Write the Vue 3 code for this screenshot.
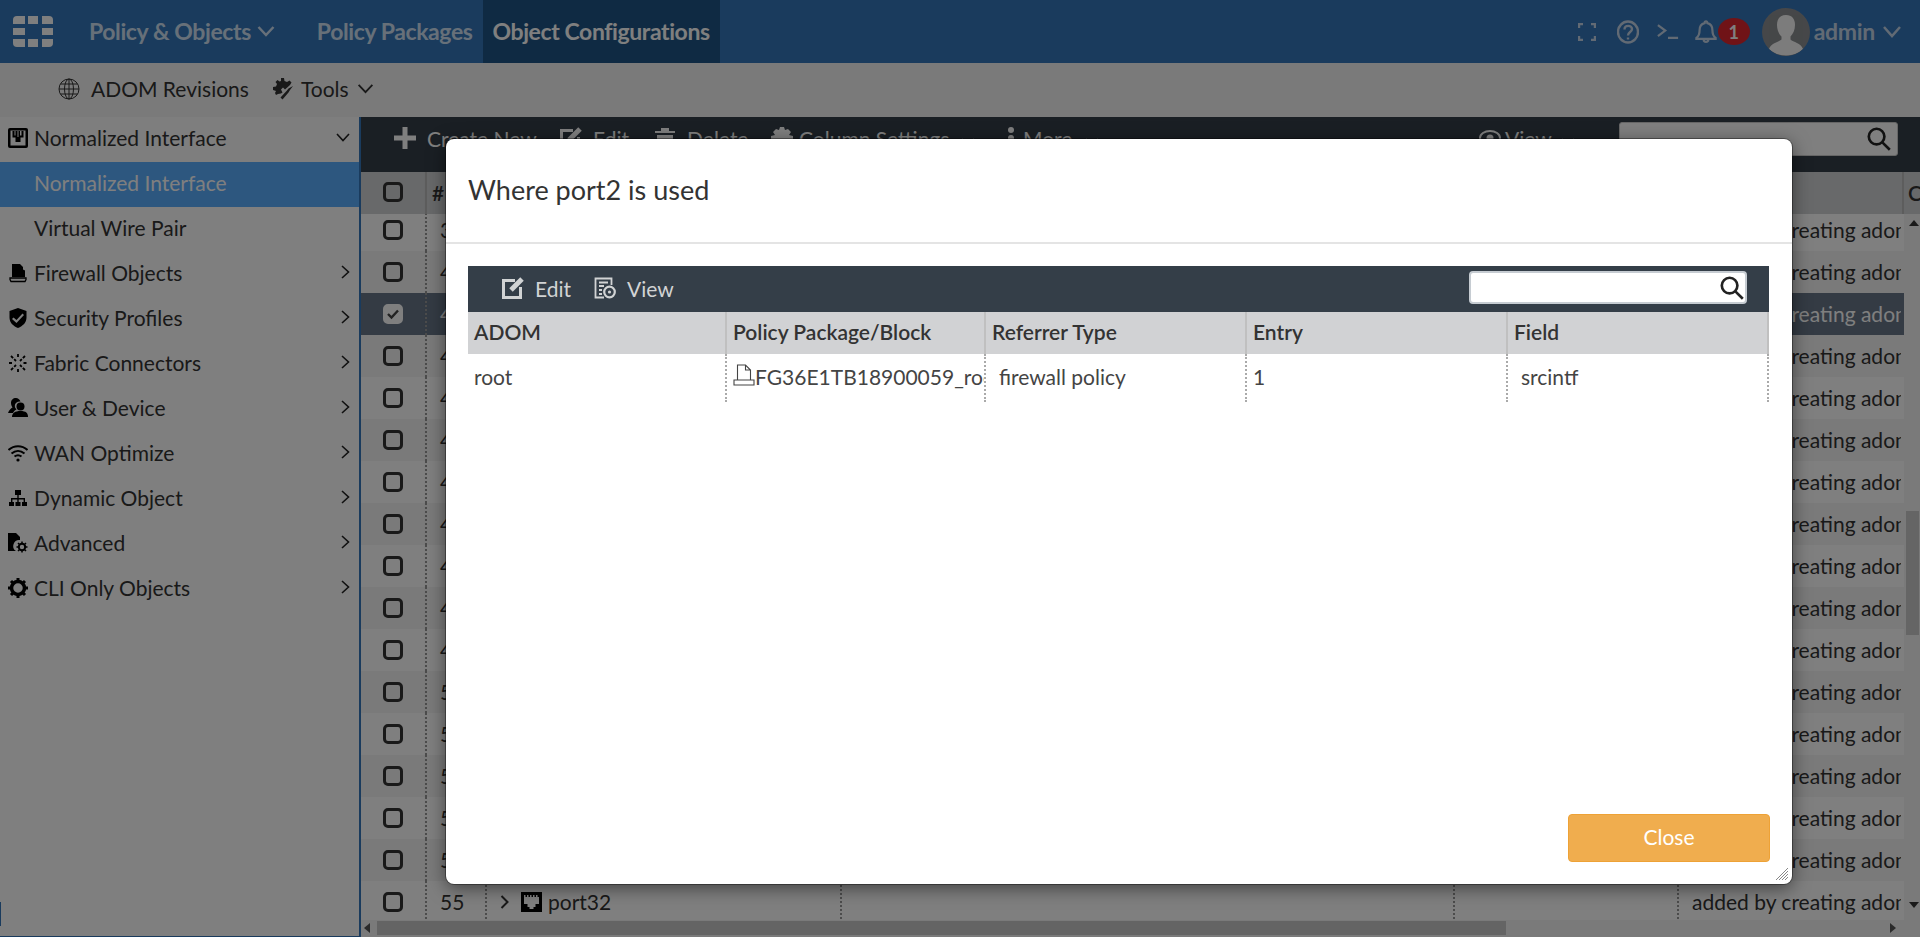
<script setup>
import { ref } from 'vue';

const navItems = ref([
    { id: 1, label: 'Policy & Objects', arrow: true, cls: 'nav-policy' },
    { id: 2, label: 'Policy Packages', arrow: false, cls: 'nav-packages' },
    { id: 3, label: 'Object Configurations', arrow: false, cls: 'nav-active' }
]);

const menuItems = ref([
    { id: 'firewall', label: 'Firewall Objects' },
    { id: 'security', label: 'Security Profiles' },
    { id: 'fabric', label: 'Fabric Connectors' },
    { id: 'user', label: 'User & Device' },
    { id: 'wan', label: 'WAN Optimize' },
    { id: 'dynamic', label: 'Dynamic Object' },
    { id: 'advanced', label: 'Advanced' },
    { id: 'cli', label: 'CLI Only Objects' }
]);

const rows = ref(Array.from({ length: 17 }, (_, i) => ({
    num: 39 + i,
    name: 'port' + (16 + i),
    selected: i === 2,
    comment: 'added by creating adom'
})));
</script>

<template>
    <div class="page">
        <header class="topbar">
            <svg class="logo" viewBox="0 0 40 31" fill="#fff">
                <path d="M4 0h8v8H0V4a4 4 0 0 1 4-4z" />
                <rect x="15" y="0" width="10" height="8" />
                <path d="M29 0h7a4 4 0 0 1 4 4v4H29z" />
                <rect x="0" y="12" width="12" height="7" />
                <rect x="29" y="12" width="11" height="7" />
                <path d="M0 23h12v8H4a4 4 0 0 1-4-4z" />
                <rect x="15" y="23" width="10" height="8" />
                <path d="M29 23h11v4a4 4 0 0 1-4 4h-7z" />
            </svg>
            <nav class="nav">
                <a v-for="item in navItems" :key="item.id" :class="['nav-item', item.cls]">
                    {{ item.label }}
                    <svg v-if="item.arrow" class="nav-arrow" viewBox="0 0 18 12"><path d="M1.5 2 9 10l7.500-8" /></svg>
                </a>
            </nav>
            <div class="top-right">
                <svg class="ti ti-expand" viewBox="0 0 18 18"><path d="M1 5V1h4M13 1h4v4M17 13v4h-4M5 17H1v-4" /></svg>
                <svg class="ti ti-help" viewBox="0 0 22 24"><ellipse cx="11" cy="12" rx="10" ry="10.500" /><path d="M7.500 9.500c0-5 7.500-4.500 7.500-.5 0 3-4 3-4 6.500" /><path d="M11 17.500v2" /></svg>
                <svg class="ti ti-term" viewBox="0 0 24 18"><path d="M1 2l8 6-8 6M12 16h11" /></svg>
                <svg class="ti ti-bell" viewBox="0 0 24 26"><path d="M12 1.500c-1 0-1.500.8-1.500 1.800C6.500 4.300 5 7.500 5 11c0 4-1.500 7-3.500 8.500v1h21v-1C20.500 18 19 15 19 11c0-3.500-1.500-6.700-5.500-7.700C13.500 2.300 13 1.500 12 1.500zM9.500 21.500c0 3 5 3 5 0" /></svg>
                <span class="badge">1</span>
                <span class="avatar">
                    <svg viewBox="0 0 48 48" fill="#fff" opacity="0.95">
                        <path d="M24 7c-6 0-9 4-9 10 0 5 2 9 4.500 11.500v3C17 34 9 35 7 41c4 4 10 6.500 17 6.500S37 45 41 41c-2-6-10-7-12.500-9.500v-3C31 26 33 22 33 17c0-6-3-10-9-10z" />
                    </svg>
                </span>
                <span class="admin">admin</span>
                <svg class="admin-arrow" viewBox="0 0 20 13"><path d="M2 2l8 9 8-9" /></svg>
            </div>
        </header>

        <div class="subbar">
            <svg class="sub-globe" viewBox="0 0 22 22">
                <circle cx="11" cy="11" r="10" />
                <ellipse cx="11" cy="11" rx="4.500" ry="10" />
                <path d="M11 1v20M1 11h20M2.500 6h17M2.500 16h17" />
            </svg>
            <span class="sub-revisions">ADOM Revisions</span>
            <svg class="sub-tools" viewBox="0 0 22 24">
                <path d="M9 1h3l.5 3 2.500 1 2.500-1.500 2 2-1.500 2.500-5 4.500-2-2-2 2 1.500 3-1.500 1L6 17l-2 1-1-2 1-2-3-1v-3l3-.5L5 7 3.500 5l2-2L7.500 4.500 9 4z" />
                <path d="M21 9l-3 4-1.500 2.500-6 7-2-2 6-6.500 2-2.500z" />
            </svg>
            <span class="sub-label">Tools</span>
            <svg class="sub-arrow" viewBox="0 0 18 12"><path d="M1.500 2 9 10l7.500-8" /></svg>
        </div>

        <div class="main">
            <aside class="sidebar">
                <div class="menu-row menu-head">
                    <svg class="menu-icon" viewBox="0 0 20 20">
                        <rect x="0" y="0" width="20" height="20" rx="2" fill="#000" />
                        <rect x="2.500" y="2.500" width="15" height="15" fill="#fff" />
                        <path d="M4.500 3v6.500h3V14h5V9.500h3V3h-2v4.500h-1.500V3h-1.500v6h-1V3H7.500v4.500H6.500V3z" fill="#000" />
                    </svg>
                    <span>Normalized Interface</span>
                    <svg class="menu-down" viewBox="0 0 14 9"><path d="M1 1l6 6.500L13 1" /></svg>
                </div>
                <div class="menu-row menu-sub menu-current">Normalized Interface</div>
                <div class="menu-row menu-sub">Virtual Wire Pair</div>
                <div v-for="m in menuItems" :key="m.id" class="menu-row">
                    <svg class="menu-icon" viewBox="0 0 20 20">
                        <g v-if="m.id === 'firewall'">
                            <path d="M4 1h8l3 3v2.500l2 1V14H4z" fill="#000" />
                            <path d="M2 15h16v1.500l-1 2H3l-1-2z" fill="none" stroke="#000" stroke-width="1.300" />
                        </g>
                        <path v-else-if="m.id === 'security'" d="M10 0l8.500 3v6.500c0 5-3.500 8.500-8.500 10.500C5 18 1.500 14.500 1.500 9.500V3zM5.500 9.500L4 11l4.500 4 7.500-8-1.500-1.500-6 6.500z" fill="#000" fill-rule="evenodd" />
                        <g v-else-if="m.id === 'fabric'" fill="none" stroke="#000" stroke-width="1.800">
                            <path d="M3 3l5 5M17 3l-5 5M3 17l5-5M17 17l-5-5M1 10h3.500M15.500 10H19M10 1v3M10 16v3" stroke-dasharray="3 1.500" />
                        </g>
                        <g v-else-if="m.id === 'user'" fill="#000">
                            <path d="M8 0C5 0 3 2 3 5c0 2 1 3.500 1.500 4.500C3 10.500 1 12 0 15h5c1-2 2-3 3.500-3.500C7 10 6.500 8.500 7 6.500 7.500 4.500 10 3 12.500 3.500 11.500 1.500 10 0 8 0z" />
                            <circle cx="12.500" cy="8.500" r="4" />
                            <path d="M4 19c0-4 3-6 8.500-6s7.500 2 7.500 6z" />
                        </g>
                        <g v-else-if="m.id === 'wan'" fill="none" stroke="#000" stroke-width="2">
                            <path d="M0.500 7c5.500-5 13.500-5 19 0M3.500 10.500c4-3.500 9-3.500 13 0M6.500 13.500c2-1.500 5-1.500 7 0" />
                            <circle cx="10" cy="17" r="1.600" fill="#000" stroke="none" />
                        </g>
                        <g v-else-if="m.id === 'dynamic'" fill="#000">
                            <rect x="7" y="2" width="6" height="5" />
                            <path d="M9.300 7h1.400v3H17v4h-1.400v-2.600H10.700V14H9.300v-2.600H4.400V14H3v-4h6.300z" />
                            <rect x="1" y="14" width="5" height="4" />
                            <rect x="7.500" y="14" width="5" height="4" />
                            <rect x="14" y="14" width="5" height="4" />
                        </g>
                        <g v-else-if="m.id === 'advanced'" fill="#000">
                            <path d="M0 0h8l4 4v3a6 6 0 0 0-4 11H0z" />
                            <circle cx="14" cy="14" r="3.200" fill="none" stroke="#000" stroke-width="2" />
                            <path d="M14 8.500v2.500M14 17v2.500M8.500 14H11M17 14h2.500M10 10l1.800 1.800M16.200 16.200L18 18M18 10l-1.800 1.800M11.800 16.200L10 18" stroke="#000" stroke-width="1.500" />
                        </g>
                        <g v-else-if="m.id === 'cli'">
                            <circle cx="10" cy="10" r="6.500" fill="none" stroke="#000" stroke-width="3.500" />
                            <path d="M10 0v4M10 16v4M0 10h4M16 10h4M3 3l3 3M14 14l3 3M17 3l-3 3M6 14l-3 3" stroke="#000" stroke-width="3" />
                        </g>
                    </svg>
                    <span>{{ m.label }}</span>
                    <svg class="menu-right" viewBox="0 0 9 14"><path d="M1 1l6.500 6L1 13" /></svg>
                </div>
                <span class="side-mark"></span>
            </aside>

            <section class="content">
                <div class="toolbar">
                    <span class="tool tool-create">
                        <svg class="tool-icon" viewBox="0 0 22 22"><path d="M11 0v22M0 11h22" stroke="#fff" stroke-width="5" /></svg>
                        Create New
                    </span>
                    <span class="tool tool-edit">
                        <svg class="tool-icon" viewBox="0 0 22 22" fill="none" stroke="#fff"><path d="M13 3.500H1.500v17h17V10" stroke-width="3" /><path d="M20 2 9 13" stroke-width="5" /></svg>
                        Edit
                    </span>
                    <span class="tool tool-delete">
                        <svg class="tool-icon" viewBox="0 0 22 22" fill="#fff"><path d="M7 1h8v3h6v2H1V4h6zM3 8h16v14H3z" /></svg>
                        Delete
                    </span>
                    <span class="tool tool-columns">
                        <svg class="tool-icon" viewBox="0 0 22 22" fill="#fff"><path d="M9 0h4l1 3 3-1 3 3-2 3 4 1v4l-4 1 2 3-3 3-3-2-1 4H9l-1-4-3 2-3-3 2-3-4-1V9l4-1-2-3 3-3 3 1z" /></svg>
                        Column Settings
                        <svg class="tool-arrow tool-arrow-cols" viewBox="0 0 18 12"><path d="M2 1l7 9 7-9" /></svg>
                    </span>
                    <span class="tool tool-more">
                        <svg class="tool-icon tool-dots" viewBox="0 0 8 22" fill="#fff"><circle cx="4" cy="3" r="3" /><circle cx="4" cy="11" r="3" /><circle cx="4" cy="19" r="3" /></svg>
                        More
                        <svg class="tool-arrow" viewBox="0 0 18 12"><path d="M2 1l7 9 7-9" /></svg>
                    </span>
                    <span class="tool tool-view">
                        <svg class="tool-icon" viewBox="0 0 22 22"><ellipse cx="11" cy="11" rx="10" ry="7" fill="none" stroke="#fff" stroke-width="2" /><circle cx="11" cy="11" r="3.500" fill="#fff" /></svg>
                        View
                        <svg class="tool-arrow" viewBox="0 0 18 12"><path d="M2 1l7 9 7-9" /></svg>
                    </span>
                    <div class="tool-search">
                        <svg class="search-icon" viewBox="0 0 20 20"><circle cx="8" cy="8" r="6.500" /><path d="M13 13l6 6" /></svg>
                    </div>
                </div>

                <div class="grid-head">
                    <div class="col-check head-cell"><span class="check"></span></div>
                    <div class="col-num head-cell">#</div>
                    <div class="col-name head-cell">Name</div>
                    <div class="col-a head-cell">Normalized</div>
                    <div class="col-b head-cell">Mapped</div>
                    <div class="col-c head-cell">Comments</div>
                    <div class="col-rest head-cell">C</div>
                </div>

                <div class="grid-wrap">
                    <div class="grid-rows">
                        <div v-for="row in rows" :key="row.num" :class="['grid-row', { selected: row.selected }]">
                            <div class="col-check cell">
                                <span :class="['check', { checked: row.selected }]">
                                    <svg v-if="row.selected" viewBox="0 0 14 12"><path d="M2 6l3.500 3.500L12 2.500" /></svg>
                                </span>
                            </div>
                            <div class="col-num cell">{{ row.num }}</div>
                            <div class="col-name cell">
                                <svg class="row-arrow" viewBox="0 0 9 14"><path d="M1.500 1l6 6-6 6" /></svg>
                                <svg class="row-port" viewBox="0 0 21 20">
                                    <rect width="21" height="20" fill="#000" />
                                    <path d="M3 3h1.500v2H6V3h1.500v2H9V3h1.500v2H12V3h1.500v2H15V3h1.500v2H18v7h-3.500v3h-2v2h-4v-2h-2v-3H3z" fill="#fff" />
                                </svg>
                                <span>{{ row.name }}</span>
                            </div>
                            <div class="col-a cell"></div>
                            <div class="col-b cell"></div>
                            <div class="col-c cell">{{ row.comment }}</div>
                        </div>
                    </div>
                    <div class="vbar">
                        <span class="vbar-up"></span>
                        <span class="vbar-thumb"></span>
                        <span class="vbar-down"></span>
                    </div>
                </div>

                <div class="hbar">
                    <span class="hbar-left"></span>
                    <span class="hbar-thumb"></span>
                    <span class="hbar-right"></span>
                </div>
            </section>
        </div>

        <div class="backdrop"></div>

        <div class="dialog">
            <div class="dialog-head">Where port2 is used</div>
            <div class="dialog-body">
                <div class="d-toolbar">
                    <svg class="d-icon d-edit" viewBox="0 0 22 22" fill="none" stroke="#d1d3d4"><path d="M13 3.500H1.500v17h17V10" stroke-width="3" /><path d="M20 2 9 13" stroke-width="5" /></svg>
                    <span class="d-label">Edit</span>
                    <svg class="d-icon d-view" viewBox="0 0 22 22" fill="none" stroke="#d1d3d4" stroke-width="1.800">
                        <path d="M10 20.500H1.500V1.500h16V8M5 5.500h9M5 9h5M5 13h3M5 17h3" />
                        <circle cx="15.500" cy="15" r="5.300" stroke-width="2.200" />
                        <circle cx="15.500" cy="15" r="1.600" fill="#d1d3d4" stroke="none" />
                    </svg>
                    <span class="d-label">View</span>
                    <div class="d-search">
                        <svg class="search-icon" viewBox="0 0 20 20"><circle cx="8" cy="8" r="6.500" /><path d="M13 13l6 6" /></svg>
                    </div>
                </div>
                <div class="d-head">
                    <div class="d-cell">ADOM</div>
                    <div class="d-cell">Policy Package/Block</div>
                    <div class="d-cell">Referrer Type</div>
                    <div class="d-cell">Entry</div>
                    <div class="d-cell">Field</div>
                </div>
                <div class="d-row">
                    <div class="d-col">root</div>
                    <div class="d-col d-clip">
                        <svg class="pkg-icon" viewBox="0 0 22 22" fill="none" stroke="#444" stroke-width="1.100">
                            <path d="M4.500 16V1h8l5 5v10M12.500 1v5h5M1 16h20v5H1z" />
                        </svg>
                        <span>FG36E1TB18900059_root</span>
                    </div>
                    <div class="d-col d-pad">firewall policy</div>
                    <div class="d-col">1</div>
                    <div class="d-col d-pad">srcintf</div>
                </div>
            </div>
            <div class="dialog-foot">
                <button class="close-btn" type="button">Close</button>
            </div>
            <svg class="resizer" viewBox="0 0 12 12" stroke="#888" stroke-width="1">
                <path d="M0 12L12 0M3 12l9-9M6 12l6-6M9 12l3-3" />
            </svg>
        </div>
    </div>
</template>

<style>
html, body {
    margin: 0;
    height: 100%;
    overflow: hidden;
}
</style>

<style scoped>
.page {
    height: 937px;
    display: flex;
    flex-direction: column;
    overflow: hidden;
    font-family: Lato, "Open Sans", sans-serif;
    font-size: 21px;
    color: #333;
    background: #fff;
    position: relative;
}

/* top bar */
.topbar {
    height: 63px;
    flex: none;
    background: #3476ba;
    display: flex;
    align-items: center;
    color: #fff;
}

.logo {
    width: 40px;
    height: 31px;
    margin-left: 13px;
    flex: none;
}

.nav {
    display: flex;
    height: 100%;
    margin-left: 36px;
}

.nav-item {
    display: flex;
    align-items: center;
    box-sizing: border-box;
    padding-bottom: 2px;
    font-size: 23px;
    font-weight: 700;
    letter-spacing: -0.4px;
    color: #cfe0f3;
    white-space: nowrap;
}

.nav-arrow {
    width: 18px;
    height: 12px;
    margin-left: 6px;
    fill: none;
    stroke: #cfe0f3;
    stroke-width: 2.5;
}

.nav-policy {
    margin-right: 42px;
}

.nav-packages {
    margin-right: 10px;
}

.nav-active {
    background: #1e5486;
    color: #fff;
    padding: 0 10px 2px;
}

.top-right {
    margin-left: auto;
    display: flex;
    align-items: center;
    padding-right: 18px;
    height: 100%;
}

.ti {
    fill: none;
    stroke: #c4d5e8;
    stroke-width: 2.4;
    flex: none;
}

.ti-expand {
    width: 18px;
    height: 18px;
}

.ti-help {
    width: 22px;
    height: 24px;
    margin-left: 21px;
}

.ti-term {
    width: 22px;
    height: 17px;
    margin-left: 18px;
}

.ti-bell {
    width: 22px;
    height: 26px;
    margin-left: 16px;
}

.badge {
    width: 32px;
    height: 27px;
    border-radius: 50%;
    background: #e0272e;
    color: #fff;
    font-size: 18px;
    font-weight: 700;
    display: flex;
    align-items: center;
    justify-content: center;
    margin-left: 1px;
}

.avatar {
    width: 48px;
    height: 48px;
    border-radius: 50%;
    background: #8c8f92;
    overflow: hidden;
    margin-left: 12px;
    flex: none;
}

.avatar svg {
    width: 48px;
    height: 48px;
    display: block;
}

.admin {
    font-size: 23px;
    font-weight: 700;
    color: #c4d5e8;
    margin-left: 4px;
    margin-bottom: 2px;
    letter-spacing: -0.3px;
}

.admin-arrow {
    width: 20px;
    height: 13px;
    margin-left: 7px;
    fill: none;
    stroke: #c4d5e8;
    stroke-width: 2.5;
}

/* second bar */
.subbar {
    height: 54px;
    flex: none;
    background: #f5f5f5;
    display: flex;
    align-items: center;
    padding-bottom: 3px;
    box-sizing: border-box;
}

.sub-globe {
    width: 22px;
    height: 22px;
    margin-left: 58px;
    fill: none;
    stroke: #333;
    stroke-width: 1;
}

.sub-revisions {
    margin-left: 11px;
}

.sub-tools {
    width: 22px;
    height: 24px;
    margin-left: 23px;
    fill: #333;
}

.sub-label {
    margin-left: 7px;
}

.sub-arrow {
    width: 17px;
    height: 11px;
    margin-left: 8px;
    fill: none;
    stroke: #333;
    stroke-width: 2;
}

.main {
    flex: 1;
    display: flex;
    min-height: 0;
}

/* left menu */
.sidebar {
    width: 359px;
    flex: none;
    background: #fff;
    border-right: 2px solid #3476ba;
    border-bottom: 1px solid #3476ba;
    position: relative;
}

.menu-row {
    height: 45px;
    display: flex;
    align-items: center;
    padding-left: 8px;
    padding-bottom: 4px;
    box-sizing: border-box;
    font-size: 21px;
    color: #333;
    position: relative;
}

.menu-icon {
    width: 20px;
    height: 20px;
    margin-right: 6px;
    flex: none;
}

.menu-head {
    background: #fcfcfc;
}

.menu-sub {
    padding-left: 34px;
}

.menu-current {
    background: #5aaeff;
    color: #fff;
}

.menu-down {
    position: absolute;
    left: 336px;
    top: 16px;
    width: 14px;
    height: 9px;
    fill: none;
    stroke: #222;
    stroke-width: 1.6;
}

.menu-right {
    position: absolute;
    left: 341px;
    top: 13px;
    width: 9px;
    height: 14px;
    fill: none;
    stroke: #222;
    stroke-width: 1.6;
}

.side-mark {
    position: absolute;
    left: 0;
    bottom: 10px;
    width: 1px;
    height: 24px;
    background: #3476ba;
}

/* table side */
.content {
    flex: 1;
    min-width: 0;
    display: flex;
    flex-direction: column;
}

.toolbar {
    height: 55px;
    flex: none;
    background: #343e48;
    display: flex;
    align-items: center;
    color: #fff;
    position: relative;
}

.tool {
    position: absolute;
    top: 0;
    height: 100%;
    box-sizing: border-box;
    padding-bottom: 13px;
    display: flex;
    align-items: center;
    white-space: nowrap;
    gap: 11px;
}

.tool-create { left: 33px; }
.tool-edit { left: 199px; }
.tool-delete { left: 293px; }
.tool-columns { left: 410px; gap: 6px; }
.tool-more { left: 646px; gap: 8px; }
.tool-view { left: 1118px; gap: 4px; }

.tool-icon {
    width: 22px;
    height: 22px;
    flex: none;
}

.tool-dots {
    width: 8px;
}

.tool-arrow {
    width: 16px;
    height: 11px;
    fill: none;
    stroke: #fff;
    stroke-width: 2;
    margin-left: 4px;
    margin-top: 10px;
}

.tool-arrow-cols {
    margin-left: 5px;
}

.tool-search {
    position: absolute;
    left: 1258px;
    top: 5px;
    width: 279px;
    height: 34px;
    background: #fff;
    border-radius: 3px;
    border: 1px solid #ccc;
    box-sizing: border-box;
}

.tool-search .search-icon {
    position: absolute;
    right: 6px;
    top: 4px;
}

.search-icon {
    width: 24px;
    height: 24px;
    fill: none;
    stroke: #222;
    stroke-width: 2.2;
}

.grid-head {
    height: 42px;
    flex: none;
    display: flex;
    background: #d1d2d4;
    font-weight: 600;
}

.head-cell {
    display: flex;
    align-items: center;
    box-sizing: border-box;
    padding-left: 5px;
    padding-bottom: 2px;
    border-right: 2px solid #bbb;
    overflow: hidden;
    white-space: nowrap;
}

.col-check {
    width: 66px;
    flex: none;
    justify-content: center;
    padding-left: 0;
}

.col-num {
    width: 60px;
    flex: none;
}

.col-name {
    width: 355px;
    flex: none;
}

.col-a {
    width: 613px;
    flex: none;
}

.col-b {
    width: 224px;
    flex: none;
}

.col-c {
    width: 225px;
    flex: none;
}

.col-rest {
    flex: 1;
    border-right: 0;
    padding-left: 4px;
}

.grid-wrap {
    flex: 1;
    min-height: 0;
    display: flex;
    overflow: hidden;
}

.grid-rows {
    width: 1543px;
    flex: none;
    margin-top: -5px;
}

.grid-row {
    height: 42px;
    display: flex;
    background: #fff;
}

.grid-row:nth-child(even) {
    background: #f5f5f5;
}

.grid-row.selected {
    background: #687688;
    color: #fff;
}

.cell {
    display: flex;
    align-items: center;
    box-sizing: border-box;
    border-right: 2px dotted #999;
    overflow: hidden;
    white-space: nowrap;
    padding-left: 13px;
    padding-bottom: 2px;
}

.col-check.cell {
    padding-left: 0;
    padding-bottom: 0;
}

.col-c.cell {
    border-right: 0;
    width: 222px;
}

.col-a.cell,
.col-b.cell {
    padding-left: 0;
}

.check {
    width: 20px;
    height: 20px;
    box-sizing: border-box;
    border: 3px solid #333;
    border-radius: 5px;
    display: flex;
    align-items: center;
    justify-content: center;
}

.check.checked {
    background: #fff;
    border-color: #fff;
}

.check svg {
    width: 14px;
    height: 12px;
    fill: none;
    stroke: #444;
    stroke-width: 2.4;
}

.row-arrow {
    width: 9px;
    height: 14px;
    fill: none;
    stroke: #333;
    stroke-width: 2;
    flex: none;
    margin-top: 2px;
}

.row-port {
    width: 21px;
    height: 20px;
    margin-left: 12px;
    margin-right: 6px;
    margin-top: 2px;
    flex: none;
}

.vbar {
    flex: 1;
    position: relative;
    background: #f5f5f5;
}

.vbar-up {
    position: absolute;
    left: 5px;
    top: 1px;
    border: 5px solid transparent;
    border-bottom: 6px solid #333;
}

.vbar-down {
    position: absolute;
    left: 5px;
    bottom: 7px;
    border: 5px solid transparent;
    border-top: 6px solid #333;
}

.vbar-thumb {
    position: absolute;
    left: 2px;
    top: 297px;
    width: 13px;
    height: 124px;
    background: #cacaca;
}

.hbar {
    height: 17px;
    flex: none;
    background: #f5f5f5;
    position: relative;
}

.hbar-left {
    position: absolute;
    left: 3px;
    top: 3px;
    border: 5px solid transparent;
    border-right: 6px solid #555;
    border-left: 0;
}

.hbar-thumb {
    position: absolute;
    left: 16px;
    top: 1px;
    width: 1129px;
    height: 14px;
    background: #c8c8c8;
}

.hbar-right {
    position: absolute;
    left: 1529px;
    top: 3px;
    border: 5px solid transparent;
    border-left: 6px solid #555;
    border-right: 0;
}

.backdrop {
    position: absolute;
    inset: 0;
    background: rgba(0, 0, 0, 0.5);
}

/* dialog */
.dialog {
    position: absolute;
    left: 446px;
    top: 139px;
    width: 1346px;
    height: 745px;
    background: #fff;
    border-radius: 8px;
    box-shadow: 0 0 0 1px rgba(0, 0, 0, 0.35), 0 4px 18px rgba(0, 0, 0, 0.5);
    display: flex;
    flex-direction: column;
}

.dialog-head {
    height: 105px;
    flex: none;
    box-sizing: border-box;
    padding: 0 22px 3px;
    border-bottom: 2px solid #e4e4e4;
    display: flex;
    align-items: center;
    font-size: 27px;
    color: #333;
}

.dialog-body {
    flex: 1;
    padding: 22px 23px 0 22px;
    min-height: 0;
}

.d-toolbar {
    height: 46px;
    box-sizing: border-box;
    padding-bottom: 2px;
    background: #343e48;
    display: flex;
    align-items: center;
    color: #d1d3d4;
    position: relative;
}

.d-icon {
    width: 22px;
    height: 22px;
    flex: none;
}

.d-edit {
    margin-left: 34px;
}

.d-view {
    margin-left: 23px;
}

.d-label {
    margin-left: 11px;
}

.d-search {
    position: absolute;
    right: 22px;
    top: 5px;
    width: 278px;
    height: 33px;
    background: #fff;
    border: 2px solid #c6ccd2;
    border-radius: 4px;
    box-sizing: border-box;
}

.d-search .search-icon {
    position: absolute;
    right: 1px;
    top: 3px;
}

.d-head,
.d-row {
    display: grid;
    grid-template-columns: 259px 259px 261px 261px 261px;
}

.d-head {
    height: 42px;
    background: #d1d2d4;
    font-weight: 600;
    color: #333;
}

.d-cell {
    display: flex;
    align-items: center;
    padding-left: 6px;
    padding-bottom: 4px;
    border-right: 2px solid #c0c0c0;
    white-space: nowrap;
    overflow: hidden;
}

.d-row {
    height: 48px;
}

.d-col {
    display: flex;
    align-items: center;
    padding-left: 6px;
    border-right: 2px dotted #aaa;
    white-space: nowrap;
    overflow: hidden;
    color: #444;
    padding-bottom: 3px;
    box-sizing: border-box;
}

.d-pad {
    padding-left: 13px;
}

.d-clip {
    overflow: hidden;
}

.pkg-icon {
    width: 22px;
    height: 22px;
    flex: none;
    margin-bottom: 4px;
}

.dialog-foot {
    display: flex;
    justify-content: flex-end;
    padding: 0 22px 22px 0;
}

.close-btn {
    width: 202px;
    height: 48px;
    background: #f0ad4e;
    border: 1px solid #eea236;
    border-radius: 4px;
    color: #fff;
    font-family: inherit;
    font-size: 21px;
    padding-bottom: 4px;
}

.resizer {
    position: absolute;
    right: 4px;
    bottom: 4px;
    width: 12px;
    height: 12px;
}
</style>
